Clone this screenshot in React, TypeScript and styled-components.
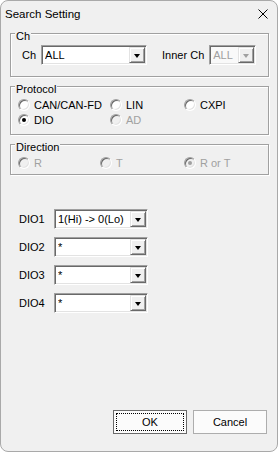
import styled, {createGlobalStyle} from "styled-components";
import {FC} from "react";

const GlobalStyle = createGlobalStyle`
    html, body {
        margin: 0;
        padding: 0;
        background: #ffffff;
    }

    body {
        font-family: "Liberation Sans", Arial, sans-serif;
        font-size: 11px;
        color: #000;
    }
`;

const Window = styled.div`
    width: 278px;
    height: 452px;
    box-sizing: border-box;
    border: 1px solid #a9a9a9;
    border-radius: 8px;
    background: #f0f0f0;
    display: flex;
    flex-direction: column;
    overflow: hidden;
`;

const TitleBar = styled.div`
    height: 26px;
    display: flex;
    align-items: center;
    justify-content: space-between;
    padding: 0 9px 0 4px;
`;

const Title = styled.span`
    font-size: 11.5px;
`;

const Body = styled.div`
    flex: 1;
    display: flex;
    flex-direction: column;
    padding: 6px 8px 17px 9px;
`;

const Groups = styled.div`
    display: flex;
    flex-direction: column;
    gap: 9px;
`;

const GroupBox = styled.div<{ $height: number; $pb: number }>`
    height: ${p => p.$height}px;
    box-sizing: border-box;
    border: 1px solid #a0a0a0;
    box-shadow: inset 1px 1px 0 #fff, 1px 1px 0 #fff;
    display: flex;
    flex-direction: column;
    align-items: flex-start;
    padding-bottom: ${p => p.$pb}px;
`;

const Caption = styled.span`
    margin: -4px 0 0 4px;
    padding: 0 1px;
    line-height: 13px;
    background: #f0f0f0;
`;

const ChRow = styled.div`
    margin-top: 2px;
    padding-left: 11px;
    display: flex;
    align-items: center;
    height: 20px;
`;

const Label = styled.span<{ $before?: number }>`
    margin: 0 5px 0 ${p => p.$before ?? 0}px;
`;

const Combo = styled.div<{ $width: number; $disabled?: boolean }>`
    width: ${p => p.$width}px;
    height: 20px;
    box-sizing: border-box;
    border: 1px solid;
    border-color: #a0a0a0 #fff #fff #a0a0a0;
    box-shadow: inset 1px 1px 0 #696969, inset -1px -1px 0 #e3e3e3;
    background: ${p => (p.$disabled ? "#f9f9f9" : "#fff")};
    color: ${p => (p.$disabled ? "#a0a0a0" : "#000")};
    display: flex;
    align-items: center;
    padding: 1px 1px 1px 3px;
`;

const ComboText = styled.span`
    flex: 1;
    white-space: nowrap;
    overflow: hidden;
`;

const ArrowButton = styled.div`
    width: 16px;
    height: 16px;
    box-sizing: border-box;
    border: 1px solid;
    border-color: #e3e3e3 #696969 #696969 #e3e3e3;
    box-shadow: inset 1px 1px 0 #fff, inset -1px -1px 0 #a0a0a0;
    background: #f0f0f0;
    display: flex;
    align-items: center;
    justify-content: center;
`;

const Arrow = styled.span<{ $disabled?: boolean }>`
    width: 0;
    height: 0;
    border-left: 3.5px solid transparent;
    border-right: 3.5px solid transparent;
    border-top: 4px solid ${p => (p.$disabled ? "#a0a0a0" : "#000")};
    margin-top: 1px;
`;

const RadioGrid = styled.div<{ $cols: string }>`
    margin-top: 1px;
    padding-left: 7px;
    display: grid;
    grid-template-columns: ${p => p.$cols};
    grid-auto-rows: 15px;
    align-self: stretch;
`;

const RadioItem = styled.label<{ $disabled?: boolean }>`
    display: flex;
    align-items: center;
    gap: 4px;
    color: ${p => (p.$disabled ? "#a0a0a0" : "#000")};
    white-space: nowrap;
`;

const RadioCircle = styled.span<{ $disabled?: boolean }>`
    width: 12px;
    height: 12px;
    box-sizing: border-box;
    border-radius: 50%;
    border: 1px solid;
    border-color: #a0a0a0 #fff #fff #a0a0a0;
    box-shadow: inset 1px 1px 0 #696969, inset -1px -1px 0 #e3e3e3;
    background: ${p => (p.$disabled ? "#f0f0f0" : "#fff")};
    display: flex;
    align-items: center;
    justify-content: center;
    flex-shrink: 0;
`;

const RadioDot = styled.span<{ $disabled?: boolean }>`
    width: 4px;
    height: 4px;
    border-radius: 50%;
    background: ${p => (p.$disabled ? "#a0a0a0" : "#000")};
`;

const DioList = styled.div`
    margin-top: 34px;
    padding-left: 9px;
    display: flex;
    flex-direction: column;
    gap: 8px;
`;

const DioRow = styled.div`
    display: flex;
    align-items: center;
    height: 20px;
`;

const DioLabel = styled.span`
    width: 35px;
`;

const Spacer = styled.div`
    flex: 1;
`;

const ButtonRow = styled.div`
    display: flex;
    justify-content: flex-end;
    gap: 6px;
    padding-right: 2px;
`;

const Button = styled.button<{ $default?: boolean }>`
    width: 74px;
    height: 24px;
    box-sizing: border-box;
    margin: 0;
    padding: 2px;
    font: inherit;
    color: #000;
    background: #fbfbfb;
    border: 1px solid ${p => (p.$default ? "#6a6a6a" : "#adadad")};
    display: flex;
    align-items: stretch;
`;

const ButtonInner = styled.span<{ $focus?: boolean }>`
    flex: 1;
    display: flex;
    align-items: center;
    justify-content: center;
    border: 1px dotted ${p => (p.$focus ? "#000" : "transparent")};
`;

type ComboProps = { width: number; value: string; disabled?: boolean };

const ComboBox: FC<ComboProps> = ({width, value, disabled}) => (
    <Combo $width={width} $disabled={disabled}>
        <ComboText>{value}</ComboText>
        <ArrowButton>
            <Arrow $disabled={disabled}/>
        </ArrowButton>
    </Combo>
);

type RadioProps = { label: string; checked?: boolean; disabled?: boolean };

const Radio: FC<RadioProps> = ({label, checked, disabled}) => (
    <RadioItem $disabled={disabled}>
        <RadioCircle $disabled={disabled}>
            {checked && <RadioDot $disabled={disabled}/>}
        </RadioCircle>
        {label}
    </RadioItem>
);

const dioRows = [
    {name: "DIO1", value: "1(Hi) -> 0(Lo)"},
    {name: "DIO2", value: "*"},
    {name: "DIO3", value: "*"},
    {name: "DIO4", value: "*"},
];

const App: FC = () => {
    return (
        <>
            <GlobalStyle/>
            <Window>
                <TitleBar>
                    <Title>Search Setting</Title>
                    <svg width="10" height="10" viewBox="0 0 10 10">
                        <path d="M0.5 0.5 L9.5 9.5 M9.5 0.5 L0.5 9.5" stroke="#000" strokeWidth="1"/>
                    </svg>
                </TitleBar>
                <Body>
                    <Groups>
                        <GroupBox $height={44} $pb={11}>
                            <Caption>Ch</Caption>
                            <ChRow>
                                <Label>Ch</Label>
                                <ComboBox width={106} value="ALL"/>
                                <Label $before={15}>Inner Ch</Label>
                                <ComboBox width={47} value="ALL" disabled/>
                            </ChRow>
                        </GroupBox>

                        <GroupBox $height={49} $pb={7}>
                            <Caption>Protocol</Caption>
                            <RadioGrid $cols="92px 74px 1fr">
                                <Radio label="CAN/CAN-FD"/>
                                <Radio label="LIN"/>
                                <Radio label="CXPI"/>
                                <Radio label="DIO" checked/>
                                <Radio label="AD" disabled/>
                            </RadioGrid>
                        </GroupBox>

                        <GroupBox $height={31} $pb={4}>
                            <Caption>Direction</Caption>
                            <RadioGrid $cols="82px 84px 1fr">
                                <Radio label="R" disabled/>
                                <Radio label="T" disabled/>
                                <Radio label="R or T" checked disabled/>
                            </RadioGrid>
                        </GroupBox>
                    </Groups>

                    <DioList>
                        {dioRows.map(row => (
                            <DioRow key={row.name}>
                                <DioLabel>{row.name}</DioLabel>
                                <ComboBox width={94} value={row.value}/>
                            </DioRow>
                        ))}
                    </DioList>

                    <Spacer/>

                    <ButtonRow>
                        <Button $default>
                            <ButtonInner $focus>OK</ButtonInner>
                        </Button>
                        <Button>
                            <ButtonInner>Cancel</ButtonInner>
                        </Button>
                    </ButtonRow>
                </Body>
            </Window>
        </>
    );
};

export default App;
